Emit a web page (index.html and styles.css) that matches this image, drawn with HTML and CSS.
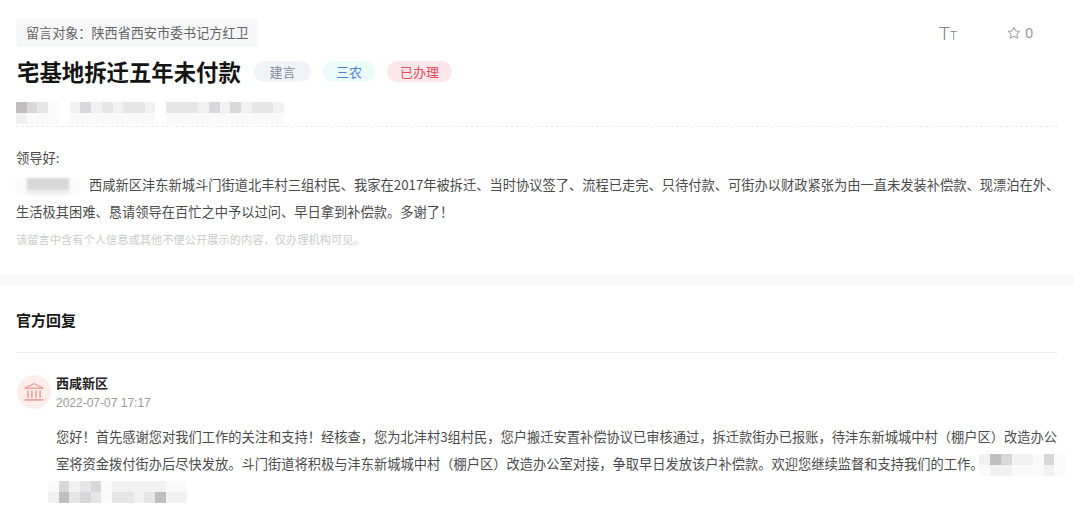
FILE: index.html
```html
<!DOCTYPE html>
<html lang="zh-CN">

<head>
    <meta charset="UTF-8">
    <title>宅基地拆迁五年未付款</title>
    <link rel="stylesheet" href="styles.css">
</head>

<body>
    <div class="page">
        <section class="message">
            <div class="top-row">
                <div class="target">留言对象&#xFF1A;陕西省西安市委书记方红卫</div>
                <div class="tools">
                    <span class="font-size"><span class="big">T</span><span class="small">T</span></span>
                    <span class="fav">
                        <svg width="14" height="14" viewBox="0 0 14 14">
                            <path d="M7 1.3l1.75 3.6 3.95.55-2.87 2.77.69 3.93L7 10.3l-3.52 1.85.69-3.93L1.3 5.45l3.95-.55z" fill="none" stroke="#93979d" stroke-width="1" stroke-linejoin="round" />
                        </svg>
                        0
                    </span>
                </div>
            </div>

            <div class="title-row">
                <h1>宅基地拆迁五年未付款</h1>
                <span class="tag tag-gray">建言</span>
                <span class="tag tag-blue">三农</span>
                <span class="tag tag-red">已办理</span>
            </div>

            <div class="meta">
                <span class="mosaic">
                    <i class="s4"></i><i class="s1"></i><i class="s3"></i><i class="s0"></i><i class="s2"></i><i class="s0"></i><i class="s0"></i><i class="s0"></i>
                </span>
                <span class="mosaic">
                    <i class="s1"></i><i class="s0"></i><i class="s3"></i><i class="s0"></i><i class="s1"></i><i class="s0"></i><i class="s2"></i><i class="s0"></i><i class="s1"></i><i class="s0"></i><i class="s2"></i><i class="s0"></i><i class="s2"></i><i class="s0"></i><i class="s1"></i><i class="s0"></i>
                </span>
                <span class="mosaic">
                    <i class="s2"></i><i class="s0"></i><i class="s2"></i><i class="s0"></i><i class="s2"></i><i class="s0"></i><i class="s1"></i><i class="s0"></i><i class="s3"></i><i class="s0"></i><i class="s1"></i><i class="s0"></i><i class="s3"></i><i class="s0"></i><i class="s1"></i><i class="s0"></i><i class="s2"></i><i class="s0"></i><i class="s2"></i><i class="s0"></i><i class="s1"></i><i class="s0"></i>
                </span>
            </div>

            <div class="content">
                <p>领导好:</p>
                <p>
                    <span class="mosaic mosaic-soft">
                        <i class="s0"></i><i class="s0"></i><i class="s3"></i><i class="s1"></i><i class="s3"></i><i class="s1"></i><i class="s3"></i><i class="s1"></i><i class="s3"></i><i class="s1"></i><i class="s0"></i><i class="s0"></i>
                    </span>
                    西咸新区沣东新城斗门街道北丰村三组村民、我家在2017年被拆迁、当时协议签了、流程已走完、只待付款、可街办以财政紧张为由一直未发装补偿款、现漂泊在外、生活极其困难、恳请领导在百忙之中予以过问、早日拿到补偿款。多谢了&#xFF01;
                </p>
            </div>
            <div class="note">该留言中含有个人信息或其他不便公开展示的内容&#xFF0C;仅办理机构可见。</div>
        </section>

        <section class="reply">
            <h2>官方回复</h2>
            <div class="reply-head">
                <div class="avatar">
                    <svg width="20" height="18" viewBox="0 0 20 18" fill="#f2a39c">
                        <path d="M10 0l9.5 4.6V6H.5V4.6zM10 1.6L4 4.6h12z" fill-rule="evenodd" />
                        <rect x="3" y="7.4" width="1.8" height="7.4" />
                        <rect x="7" y="7.4" width="1.8" height="7.4" />
                        <rect x="11.2" y="7.4" width="1.8" height="7.4" />
                        <rect x="15.2" y="7.4" width="1.8" height="7.4" />
                        <rect x=".5" y="16" width="19" height="1.8" />
                    </svg>
                </div>
                <div>
                    <div class="org">西咸新区</div>
                    <div class="date">2022-07-07 17:17</div>
                </div>
            </div>
            <p class="reply-text">
                您好&#xFF01;首先感谢您对我们工作的关注和支持&#xFF01;经核查&#xFF0C;您为北沣村3组村民&#xFF0C;您户搬迁安置补偿协议已审核通过&#xFF0C;拆迁款街办已报账&#xFF0C;待沣东新城城中村&#xFF08;棚户区&#xFF09;改造办公室将资金拨付街办后尽快发放。斗门街道将积极与沣东新城城中村&#xFF08;棚户区&#xFF09;改造办公室对接&#xFF0C;争取早日发放该户补偿款。欢迎您继续监督和支持我们的工作。
                <span class="mosaic mosaic-end">
                    <i class="s1"></i><i class="s0"></i><i class="s4"></i><i class="s1"></i><i class="s3"></i><i class="s1"></i><i class="s1"></i><i class="s0"></i><i class="s1"></i><i class="s0"></i><i class="s0"></i><i class="s0"></i><i class="s3"></i><i class="s1"></i><i class="s0"></i><i class="s0"></i>
                </span>
                <br>
                <span class="mosaic mosaic-line">
                    <i class="s0"></i><i class="s1"></i><i class="s3"></i><i class="s4"></i><i class="s1"></i><i class="s2"></i><i class="s2"></i><i class="s3"></i><i class="s3"></i><i class="s2"></i><i class="s0"></i><i class="s0"></i><i class="s1"></i><i class="s2"></i><i class="s1"></i><i class="s2"></i><i class="s1"></i><i class="s1"></i><i class="s1"></i><i class="s2"></i><i class="s1"></i><i class="s4"></i><i class="s0"></i><i class="s1"></i><i class="s0"></i><i class="s1"></i>
                </span>
            </p>
        </section>
    </div>
</body>

</html>
```

FILE: styles.css
```css
* {
    box-sizing: border-box;
}

body {
    margin: 0;
    font-family: "Noto Sans CJK SC", "Liberation Sans", sans-serif;
    background: #fff;
    color: #4b4b4b;
    overflow: hidden;
}

.page {
    width: 1074px;
}

.message {
    height: 275px;
    padding: 19px 16px 0;
}

.top-row {
    display: flex;
    justify-content: space-between;
}

.target {
    height: 28px;
    width: 242px;
    padding-left: 10px;
    background: #f6f7f9;
    border-radius: 2px;
    color: #666;
    font-size: 13.1px;
    line-height: 28px;
    white-space: nowrap;
}

.tools {
    display: flex;
    align-items: center;
    color: #93979d;
    font-size: 13.6px;
    margin-right: 25px;
}

.font-size {
    font-family: Roboto, sans-serif;
    font-weight: 300;
    color: #7f8388;
    margin-right: 50px;
    white-space: nowrap;
}

.font-size .big {
    font-size: 19px;
}

.font-size .small {
    font-size: 12px;
}

.fav {
    display: flex;
    align-items: center;
    gap: 4px;
    font-family: "Liberation Sans", sans-serif;
    font-size: 14px;
}

.title-row {
    display: flex;
    align-items: center;
    height: 30px;
    margin-top: 9px;
}

h1 {
    margin: 0 13px 0 1px;
    font-size: 22.4px;
    font-weight: 700;
    color: #151515;
    white-space: nowrap;
}

.tag {
    height: 21px;
    padding: 0 13px;
    margin-right: 12px;
    border-radius: 11px;
    font-size: 13px;
    line-height: 21px;
}

.tag-gray {
    padding: 0 15.5px;
    background: #f0f4f9;
    color: #7f8a99;
}

.tag-blue {
    background: #ebfbf9;
    color: #4b83d3;
}

.tag-red {
    background: #fde7ea;
    color: #e24a60;
}

/* blurred names: columns of two cells */
.meta {
    display: flex;
    gap: 11px;
    height: 25px;
    margin-top: 16px;
    border-bottom: 1px dashed #ececec;
}

.mosaic {
    display: inline-grid;
    grid-auto-flow: column;
    grid-template-rows: 11px 11px;
    grid-auto-columns: 10.7px;
    vertical-align: middle;
    filter: blur(0.5px);
}

.mosaic i {
    display: block;
}

.s0 { background: #fafafa; }
.s1 { background: #f1f1f1; }
.s2 { background: #e6e6e6; }
.s3 { background: #d8d8da; }
.s4 { background: #c0bfbe; }

.mosaic-soft {
    grid-template-rows: 12px 5px;
    margin-right: 6px;
    filter: blur(1.2px);
}

.content {
    margin: 17px -12px 0 0;
    font-size: 13.25px;
    line-height: 27px;
}

.content p {
    margin: 0;
}

.note {
    margin-top: 1px;
    font-size: 11.25px;
    line-height: 27px;
    color: #cbcbcb;
    white-space: nowrap;
}

.reply {
    border-top: 10px solid #f6f7f9;
    padding: 0 16px;
}

h2 {
    margin: 0;
    height: 68px;
    border-bottom: 1px solid #f0f0f0;
    font-size: 15px;
    font-weight: 700;
    line-height: 69px;
    color: #151515;
}

.reply-head {
    display: flex;
    gap: 5px;
    margin-top: 22px;
}

.avatar {
    display: flex;
    align-items: center;
    justify-content: center;
    flex: none;
    width: 34px;
    height: 34px;
    margin-left: 1px;
    border-radius: 50%;
    background: #fdeeec;
}

.org {
    margin-top: -2px;
    font-size: 13px;
    font-weight: 700;
    line-height: 19px;
    color: #222;
}

.date {
    margin-top: 2px;
    font-family: "Liberation Sans", sans-serif;
    font-size: 12px;
    line-height: 19px;
    color: #999;
}

.reply-text {
    margin: 10px 0 0 40px;
    font-size: 13.25px;
    line-height: 27px;
}

.mosaic-end {
    margin: 0 -14px 0 -7px;
}

.mosaic-line {
    margin-left: -8px;
}
```
